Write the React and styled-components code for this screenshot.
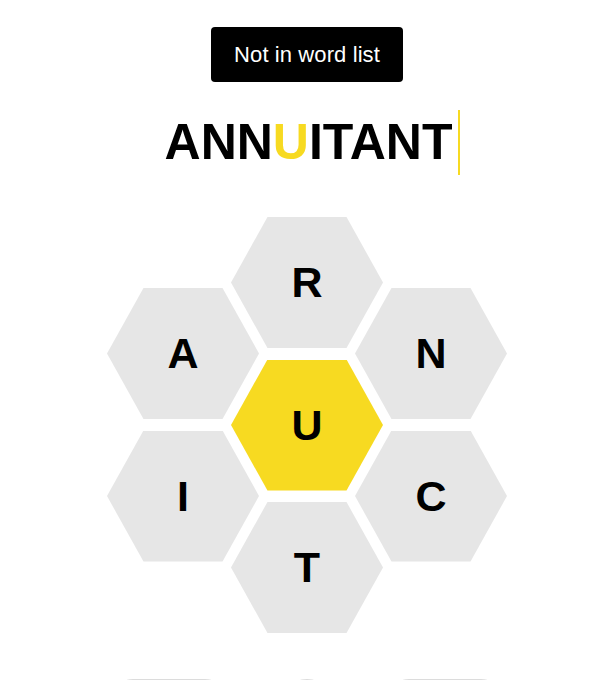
import React from "react";
import styled, { createGlobalStyle } from "styled-components";

const GlobalStyle = createGlobalStyle`
  html, body {
    margin: 0;
    padding: 0;
    background: #ffffff;
    overflow: hidden;
  }
  body {
    font-family: "Liberation Sans", Arial, sans-serif;
    color: #000000;
  }
`;

const Page = styled.div`
  height: 100vh;
  overflow: hidden;
  display: flex;
  flex-direction: column;
  align-items: center;
  & > * {
    flex-shrink: 0;
  }
`;

const Toast = styled.div`
  margin-top: 27px;
  width: 192px;
  height: 55px;
  background: #000000;
  color: #ffffff;
  border-radius: 4px;
  display: flex;
  align-items: center;
  justify-content: center;
  font-size: 22px;
  letter-spacing: 0.1px;
`;

const WordRow = styled.div`
  margin-top: 28px;
  height: 65px;
  display: flex;
  align-items: center;
  padding-left: 11px;
`;

const Word = styled.span`
  font-size: 50px;
  font-weight: 700;
  line-height: 65px;
`;

const Letter = styled.span`
  color: ${(p) => (p.$center ? "#f7da21" : "#000000")};
`;

const Cursor = styled.span`
  width: 2px;
  height: 65px;
  margin-left: 6px;
  background: #f7da21;
`;

const Hive = styled.div`
  margin-top: 42px;
  display: flex;
  align-items: flex-start;
`;

const HiveColumn = styled.div`
  display: flex;
  flex-direction: column;
  gap: 11.5px;
  margin-top: ${(p) => p.$offset || 0}px;
  & + & {
    margin-left: -28px;
  }
`;

const Cell = styled.div`
  width: 152px;
  height: 131px;
  background: ${(p) => (p.$center ? "#f7da21" : "#e6e6e6")};
  clip-path: polygon(24% 0, 76% 0, 100% 50%, 76% 100%, 24% 100%, 0 50%);
  display: flex;
  align-items: center;
  justify-content: center;
  font-size: 43px;
  font-weight: 700;
  color: #000000;
`;

const Controls = styled.div`
  margin-top: 46px;
  display: flex;
  align-items: flex-start;
  gap: 50px;
`;

const PillButton = styled.button`
  width: 120px;
  height: 48px;
  border: 1px solid #dcdcdc;
  border-radius: 24px;
  background: #ffffff;
  font-family: inherit;
  font-size: 16px;
  color: #000000;
`;

const RoundButton = styled.button`
  width: 56px;
  height: 56px;
  border: 1px solid #dcdcdc;
  border-radius: 50%;
  background: #ffffff;
`;

const word = "ANNUITANT";
const centerLetter = "U";

const columns = [
  { offset: 71, letters: ["A", "I"] },
  { offset: 0, letters: ["R", "U", "T"] },
  { offset: 71, letters: ["N", "C"] },
];

export default function App() {
  return (
    <Page>
      <GlobalStyle />
      <Toast>Not in word list</Toast>
      <WordRow>
        <Word>
          {word.split("").map((ch, i) => (
            <Letter key={i} $center={ch === centerLetter}>
              {ch}
            </Letter>
          ))}
        </Word>
        <Cursor />
      </WordRow>
      <Hive>
        {columns.map((col, ci) => (
          <HiveColumn key={ci} $offset={col.offset}>
            {col.letters.map((l) => (
              <Cell key={l} $center={l === centerLetter}>
                {l}
              </Cell>
            ))}
          </HiveColumn>
        ))}
      </Hive>
      <Controls>
        <PillButton>Delete</PillButton>
        <RoundButton aria-label="Shuffle" />
        <PillButton>Enter</PillButton>
      </Controls>
    </Page>
  );
}
